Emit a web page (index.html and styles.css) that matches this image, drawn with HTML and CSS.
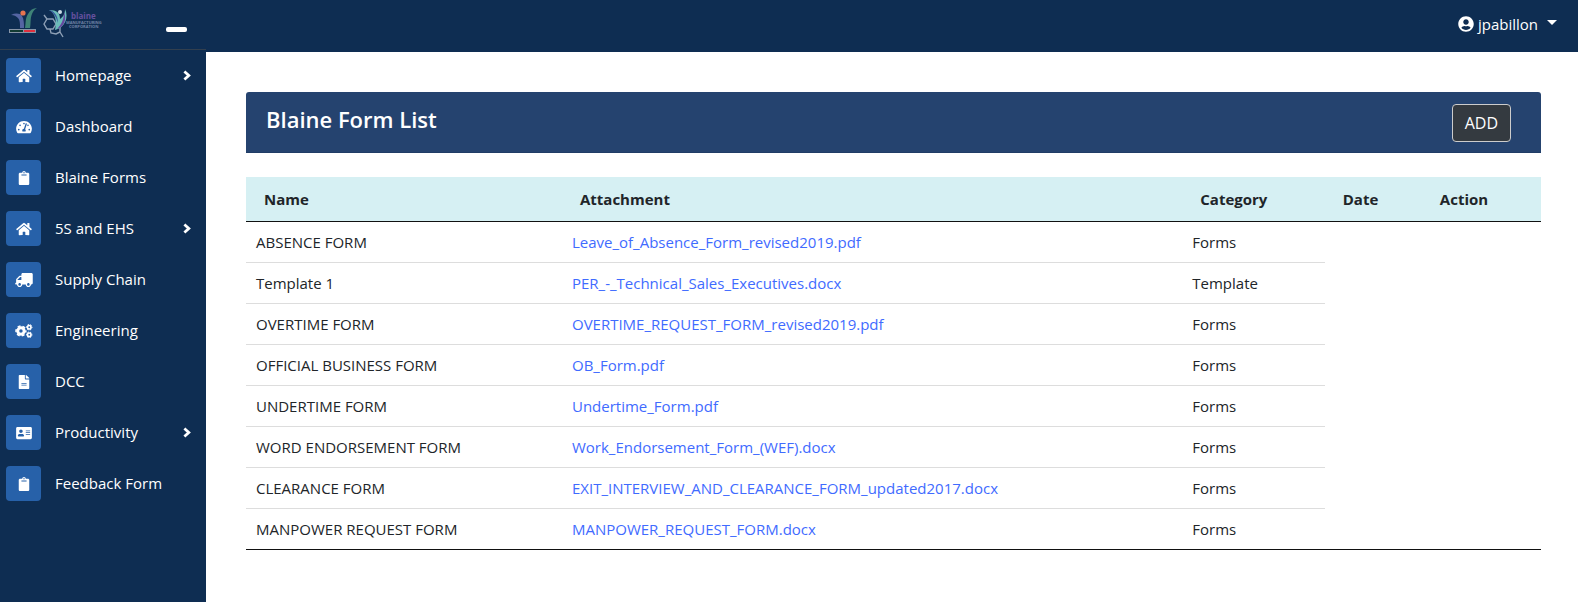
FILE: index.html
```
<!DOCTYPE html>
<html lang="en">
<head>
<meta charset="utf-8">
<title>Blaine Form List</title>
<link rel="stylesheet" href="styles.css">
</head>
<body>
<svg class="sprite" aria-hidden="true">
  <symbol id="home" viewBox="0 0 576 512"><path d="M280.37 148.26L96 300.11V464a16 16 0 0 0 16 16l112.06-.29a16 16 0 0 0 15.92-16V368a16 16 0 0 1 16-16h64a16 16 0 0 1 16 16v95.64a16 16 0 0 0 16 16.05L464 480a16 16 0 0 0 16-16V300L295.67 148.26a12.19 12.19 0 0 0-15.3 0zM571.6 251.47L488 182.56V44.05a12 12 0 0 0-12-12h-56a12 12 0 0 0-12 12v72.61L318.47 43a48 48 0 0 0-61 0L4.34 251.47a12 12 0 0 0-1.6 16.9l25.5 31A12 12 0 0 0 45.15 301l235.22-193.74a12.19 12.19 0 0 1 15.3 0L530.9 301a12 12 0 0 0 16.9-1.6l25.5-31a12 12 0 0 0-1.7-16.93z"/></symbol>
  <symbol id="gauge" viewBox="0 0 576 512"><path d="M288 32C128.94 32 0 160.94 0 320c0 52.8 14.25 102.26 39.06 144.8 5.61 9.62 16.3 15.2 27.44 15.2h443c11.14 0 21.83-5.58 27.44-15.2C561.75 422.26 576 372.8 576 320c0-159.06-128.94-288-288-288zm0 64c14.71 0 26.58 10.13 30.32 23.65-1.11 2.26-2.64 4.23-3.45 6.67l-9.22 27.67c-5.13 3.49-10.97 6.01-17.64 6.01-17.67 0-32-14.33-32-32S270.33 96 288 96zM96 384c-17.67 0-32-14.33-32-32s14.33-32 32-32 32 14.33 32 32-14.33 32-32 32zm48-160c-17.67 0-32-14.33-32-32s14.33-32 32-32 32 14.33 32 32-14.33 32-32 32zm246.77-72.41l-61.33 184C343.13 347.33 352 364.54 352 384c0 11.72-3.38 22.55-8.88 32H232.88c-5.5-9.45-8.88-20.28-8.88-32 0-33.94 26.5-61.43 59.9-63.59l61.34-184.01c4.17-12.56 17.73-19.45 30.36-15.17 12.57 4.19 19.35 17.79 15.17 30.36zm14.66 57.2l15.52-46.55c3.47-1.29 7.13-2.23 11.05-2.23 17.67 0 32 14.33 32 32s-14.33 32-32 32c-11.38-.01-20.89-6.28-26.57-15.22zM480 384c-17.67 0-32-14.33-32-32s14.33-32 32-32 32 14.33 32 32-14.33 32-32 32z"/></symbol>
  <symbol id="clipboard" viewBox="0 0 384 512"><path d="M384 112v352c0 26.51-21.49 48-48 48H48c-26.51 0-48-21.49-48-48V112c0-26.51 21.49-48 48-48h80c0-35.29 28.71-64 64-64s64 28.71 64 64h80c26.51 0 48 21.49 48 48zM192 40c-13.255 0-24 10.745-24 24s10.745 24 24 24 24-10.745 24-24-10.745-24-24-24m96 114v-20a6 6 0 0 0-6-6H102a6 6 0 0 0-6 6v20a6 6 0 0 0 6 6h180a6 6 0 0 0 6-6z"/></symbol>
  <symbol id="truck" viewBox="0 0 640 512"><path transform="matrix(-1 0 0 1 640 0)" d="M624 352h-16V243.9c0-12.7-5.1-24.9-14.1-33.9L494 110.1c-9-9-21.2-14.1-33.9-14.1H416V48c0-26.5-21.5-48-48-48H48C21.5 0 0 21.5 0 48v320c0 26.5 21.5 48 48 48h16c0 53 43 96 96 96s96-43 96-96h128c0 53 43 96 96 96s96-43 96-96h48c8.8 0 16-7.2 16-16v-32c0-8.8-7.2-16-16-16zM160 464c-26.5 0-48-21.5-48-48s21.5-48 48-48 48 21.5 48 48-21.5 48-48 48zm320 0c-26.5 0-48-21.5-48-48s21.5-48 48-48 48 21.5 48 48-21.5 48-48 48zm80-208H416V144h44.1l99.9 99.9V256z"/></symbol>
  <symbol id="cogs" viewBox="0 0 640 512"><g fill="none" stroke="currentColor"><circle cx="208" cy="256" r="118" stroke-width="108"/><circle cx="208" cy="256" r="180" stroke-width="56" stroke-dasharray="108.5 80" stroke-dashoffset="54"/><circle cx="512" cy="118" r="64" stroke-width="60"/><circle cx="512" cy="118" r="100" stroke-width="36" stroke-dasharray="60 44.720" stroke-dashoffset="30"/><circle cx="512" cy="394" r="64" stroke-width="60"/><circle cx="512" cy="394" r="100" stroke-width="36" stroke-dasharray="60 44.720" stroke-dashoffset="30"/></g></symbol>
  <symbol id="file" viewBox="0 0 384 512"><path d="M224 136V0H24C10.7 0 0 10.7 0 24v464c0 13.3 10.7 24 24 24h336c13.3 0 24-10.7 24-24V160H248c-13.2 0-24-10.8-24-24zm64 236c0 6.6-5.4 12-12 12H108c-6.6 0-12-5.4-12-12v-8c0-6.6 5.4-12 12-12h168c6.6 0 12 5.4 12 12v8zm0-72v8c0 6.6-5.4 12-12 12H108c-6.6 0-12-5.4-12-12v-8c0-6.6 5.4-12 12-12h168c6.6 0 12 5.4 12 12zM384 121.9v6.1H256V0h6.1c6.4 0 12.5 2.5 17 7l97.9 98c4.5 4.5 7 10.6 7 16.9z"/></symbol>
  <symbol id="card" viewBox="0 0 576 512"><path d="M528 32H48C21.5 32 0 53.5 0 80v352c0 26.5 21.5 48 48 48h480c26.5 0 48-21.5 48-48V80c0-26.500-21.500-48-48-48zm-352 96c35.300 0 64 28.700 64 64s-28.700 64-64 64-64-28.700-64-64 28.700-64 64-64zm112 236.800c0 10.600-10 19.200-22.400 19.200H86.400C74 384 64 375.400 64 364.800v-19.200c0-31.800 30.100-57.600 67.200-57.600h5c12.300 5.100 25.700 8 39.800 8s27.600-2.900 39.800-8h5c37.100 0 67.200 25.800 67.200 57.600v19.200zM512 312c0 4.400-3.600 8-8 8H360c-4.400 0-8-3.600-8-8v-16c0-4.400 3.600-8 8-8h144c4.400 0 8 3.600 8 8v16zm0-64c0 4.400-3.600 8-8 8H360c-4.400 0-8-3.600-8-8v-16c0-4.400 3.600-8 8-8h144c4.400 0 8 3.600 8 8v16zm0-64c0 4.400-3.600 8-8 8H360c-4.400 0-8-3.600-8-8v-16c0-4.400 3.600-8 8-8h144c4.400 0 8 3.600 8 8v16z"/></symbol>
  <symbol id="user" viewBox="0 0 496 512"><path d="M248 8C111 8 0 119 0 256s111 248 248 248 248-111 248-248S385 8 248 8zm0 96c48.600 0 88 39.400 88 88s-39.400 88-88 88-88-39.400-88-88 39.400-88 88-88zm0 344c-58.700 0-111.300-26.600-146.500-68.200 18.800-35.400 55.600-59.800 98.500-59.800 2.400 0 4.800.4 7.100 1.100 13 4.200 26.600 6.900 40.900 6.900 14.300 0 28-2.700 40.900-6.900 2.300-.7 4.700-1.100 7.100-1.100 42.900 0 79.700 24.400 98.500 59.800C359.300 421.400 306.700 448 248 448z"/></symbol>
  <symbol id="chevron" viewBox="0 0 8 10"><path d="M1.400 1 5.800 5l-4.400 4" fill="none" stroke="currentColor" stroke-width="2.800"/></symbol>
</svg>

<div class="app">
  <aside class="sidebar">
    <div class="brand">
      <svg class="logo" viewBox="0 0 94 34" role="img" aria-label="Blaine Manufacturing Corporation">
        <path d="M3 11c4-2 9-2 11 1 2 3 2 8 2 12h-4c0-5 0-8-2-10-2-2-4-3-7-3z" fill="#5565a3"/>
        <path d="M29 4c-2 1-4 3-5 6-2 5-1 9-2 14h-5c1-5 0-9 3-14 2-4 5-6 9-6z" fill="#3f8377"/>
        <circle cx="15" cy="9" r="2.600" fill="#e8744f"/>
        <path d="M1 25h27v4H1z" fill="#8795a7"/>
        <path d="M2 26h13v2H2z" fill="#123b33"/><path d="M16 26h11v2H16z" fill="#e0303e"/>
        <g fill="none" stroke="#8ea0b6" stroke-width="1.400"><path d="M36 20l3-5h6l3 5-3 5h-6zM48 20l4 3v5l-4 2-5-1-1-4M39 15l-3-4M52 28l3 5"/></g>
        <path d="M41 6c8 0 11 3 11 9 3-2 5-5 5-10 4 8 0 19-10 21 2-10 0-17-6-20z" fill="#6bbcb9"/>
        <path d="M49 25c4-4 7-9 7-17 3 8 0 15-7 17z" fill="#65489f"/>
        <path d="M41 6c5 1 9 5 9 13-2-6-4-10-9-13z" fill="#35559a"/>
        <circle cx="52" cy="8" r="2" fill="#c9dde4"/>
        <text x="63" y="15" class="logo-name">blaine</text>
        <text x="58" y="20" class="logo-sub">MANUFACTURING</text>
        <text x="61" y="24" class="logo-sub">CORPORATION</text>
      </svg>
      <button class="toggle" aria-label="Collapse menu"></button>
    </div>
    <nav class="menu">
      <a href="#" class="item"><span class="tile"><svg><use href="#home"/></svg></span><span class="label">Homepage</span><svg class="more"><use href="#chevron"/></svg></a>
      <a href="#" class="item"><span class="tile"><svg><use href="#gauge"/></svg></span><span class="label">Dashboard</span></a>
      <a href="#" class="item"><span class="tile"><svg><use href="#clipboard"/></svg></span><span class="label">Blaine Forms</span></a>
      <a href="#" class="item"><span class="tile"><svg><use href="#home"/></svg></span><span class="label">5S and EHS</span><svg class="more"><use href="#chevron"/></svg></a>
      <a href="#" class="item"><span class="tile"><svg><use href="#truck"/></svg></span><span class="label">Supply Chain</span></a>
      <a href="#" class="item"><span class="tile"><svg><use href="#cogs"/></svg></span><span class="label">Engineering</span></a>
      <a href="#" class="item"><span class="tile"><svg><use href="#file"/></svg></span><span class="label">DCC</span></a>
      <a href="#" class="item"><span class="tile"><svg><use href="#card"/></svg></span><span class="label">Productivity</span><svg class="more"><use href="#chevron"/></svg></a>
      <a href="#" class="item"><span class="tile"><svg><use href="#clipboard"/></svg></span><span class="label">Feedback Form</span></a>
    </nav>
  </aside>
  <div class="page">
    <header class="topbar">
      <button class="account"><svg><use href="#user"/></svg><span>jpabillon</span><i class="caret"></i></button>
    </header>
    <main class="content">
      <div class="card-header">
        <h1>Blaine Form List</h1>
        <button class="add">ADD</button>
      </div>
      <table class="forms">
        <colgroup><col class="c-name"><col class="c-file"><col class="c-cat"><col class="c-date"><col class="c-act"></colgroup>
        <thead><tr><th>Name</th><th>Attachment</th><th>Category</th><th>Date</th><th>Action</th></tr></thead>
        <tbody>
          <tr><td>ABSENCE FORM</td><td><a href="#">Leave_of_Absence_Form_revised2019.pdf</a></td><td>Forms</td></tr>
          <tr><td>Template 1</td><td><a href="#">PER_-_Technical_Sales_Executives.docx</a></td><td>Template</td></tr>
          <tr><td>OVERTIME FORM</td><td><a href="#">OVERTIME_REQUEST_FORM_revised2019.pdf</a></td><td>Forms</td></tr>
          <tr><td>OFFICIAL BUSINESS FORM</td><td><a href="#">OB_Form.pdf</a></td><td>Forms</td></tr>
          <tr><td>UNDERTIME FORM</td><td><a href="#">Undertime_Form.pdf</a></td><td>Forms</td></tr>
          <tr><td>WORD ENDORSEMENT FORM</td><td><a href="#">Work_Endorsement_Form_(WEF).docx</a></td><td>Forms</td></tr>
          <tr><td>CLEARANCE FORM</td><td><a href="#">EXIT_INTERVIEW_AND_CLEARANCE_FORM_updated2017.docx</a></td><td>Forms</td></tr>
          <tr><td>MANPOWER REQUEST FORM</td><td><a href="#">MANPOWER_REQUEST_FORM.docx</a></td><td>Forms</td></tr>
        </tbody>
      </table>
    </main>
  </div>
</div>
</body>
</html>
```
FILE: styles.css
```
* { box-sizing: border-box; }
body {
  margin: 0;
  background: #fff;
  color: #212529;
  font-family: "Segoe UI", "Open Sans", "Noto Sans", sans-serif;
  font-size: 15px;
  line-height: 24px;
}
a { color: #3f6bff; text-decoration: none; }
button { font: inherit; cursor: pointer; }
svg { fill: currentColor; }
.sprite { position: absolute; width: 0; height: 0; }
.app { display: flex; min-height: 100vh; }

.sidebar { flex: none; width: 206px; background: #0e2d52; color: #fff; }
.brand {
  display: flex;
  justify-content: space-between;
  height: 50px;
  padding: 4px 19px 0 8px;
  border-bottom: 1px solid #323f4e;
}
.logo { width: 94px; height: 34px; }
.logo-name { font: bold 8px "Open Sans", sans-serif; fill: #65509f; }
.logo-sub { font: bold 4px "Open Sans", sans-serif; fill: #7083a5; }
.toggle {
  width: 21px;
  height: 5px;
  margin-top: 23px;
  padding: 0;
  border: 0;
  border-radius: 2px;
  background: #fff;
}
.menu { display: flex; flex-direction: column; gap: 16px; padding: 8px 15px 8px 6px; }
.item { display: flex; align-items: center; height: 35px; color: #fff; }
.tile {
  display: grid;
  place-items: center;
  width: 35px;
  height: 35px;
  margin-right: 14px;
  border-radius: 4px;
  background: #2761a9;
}
.tile svg { width: 18px; height: 14px; }
.label { flex: 1; padding-bottom: 2px; }
.more { width: 8px; height: 11px; }

.page { flex: 1; min-width: 0; }
.topbar {
  display: flex;
  align-items: center;
  justify-content: flex-end;
  height: 52px;
  padding: 0 21px 4px 0;
  background: #0e2d52;
}
.account {
  display: flex;
  align-items: center;
  gap: 4px;
  padding: 0;
  border: 0;
  background: none;
  color: #fff;
}
.account svg { width: 16px; height: 16px; }
.caret { margin: 0 0 3px 5px; border: 5px solid transparent; border-top-color: #fff; border-bottom: 0; }

.content { padding: 40px 37px 40px 40px; }
.card-header {
  display: flex;
  align-items: flex-start;
  justify-content: space-between;
  padding: 12px 30px 10px 20px;
  border-bottom: 1px solid #203c66;
  border-radius: 3px 3px 0 0;
  background: #25436f;
}
h1 { margin: 0; color: #fff; font-size: 22px; line-height: 31px; font-weight: 600; }
.add {
  height: 38px;
  padding: 0 12px;
  border: 1px solid #ccc;
  border-radius: 4px;
  background: #343a40;
  color: #fff;
  font-size: 16px;
}
.forms { width: 100%; margin-top: 24px; border-collapse: separate; border-spacing: 0; table-layout: fixed; border-bottom: 1px solid #111; }
.c-name { width: 24.4%; }
.c-file { width: 47.9%; }
.c-cat { width: 11%; }
.c-date { width: 7.5%; }
.c-act { width: 9.2%; }
th { padding: 10px 18px; border-bottom: 1px solid #111; background: #d6f0f3; text-align: left; font-weight: 700; }
td { padding: 8px 10px; border-top: 1px solid #ddd; }
tbody tr:first-child td { border-top: 0; }
```
